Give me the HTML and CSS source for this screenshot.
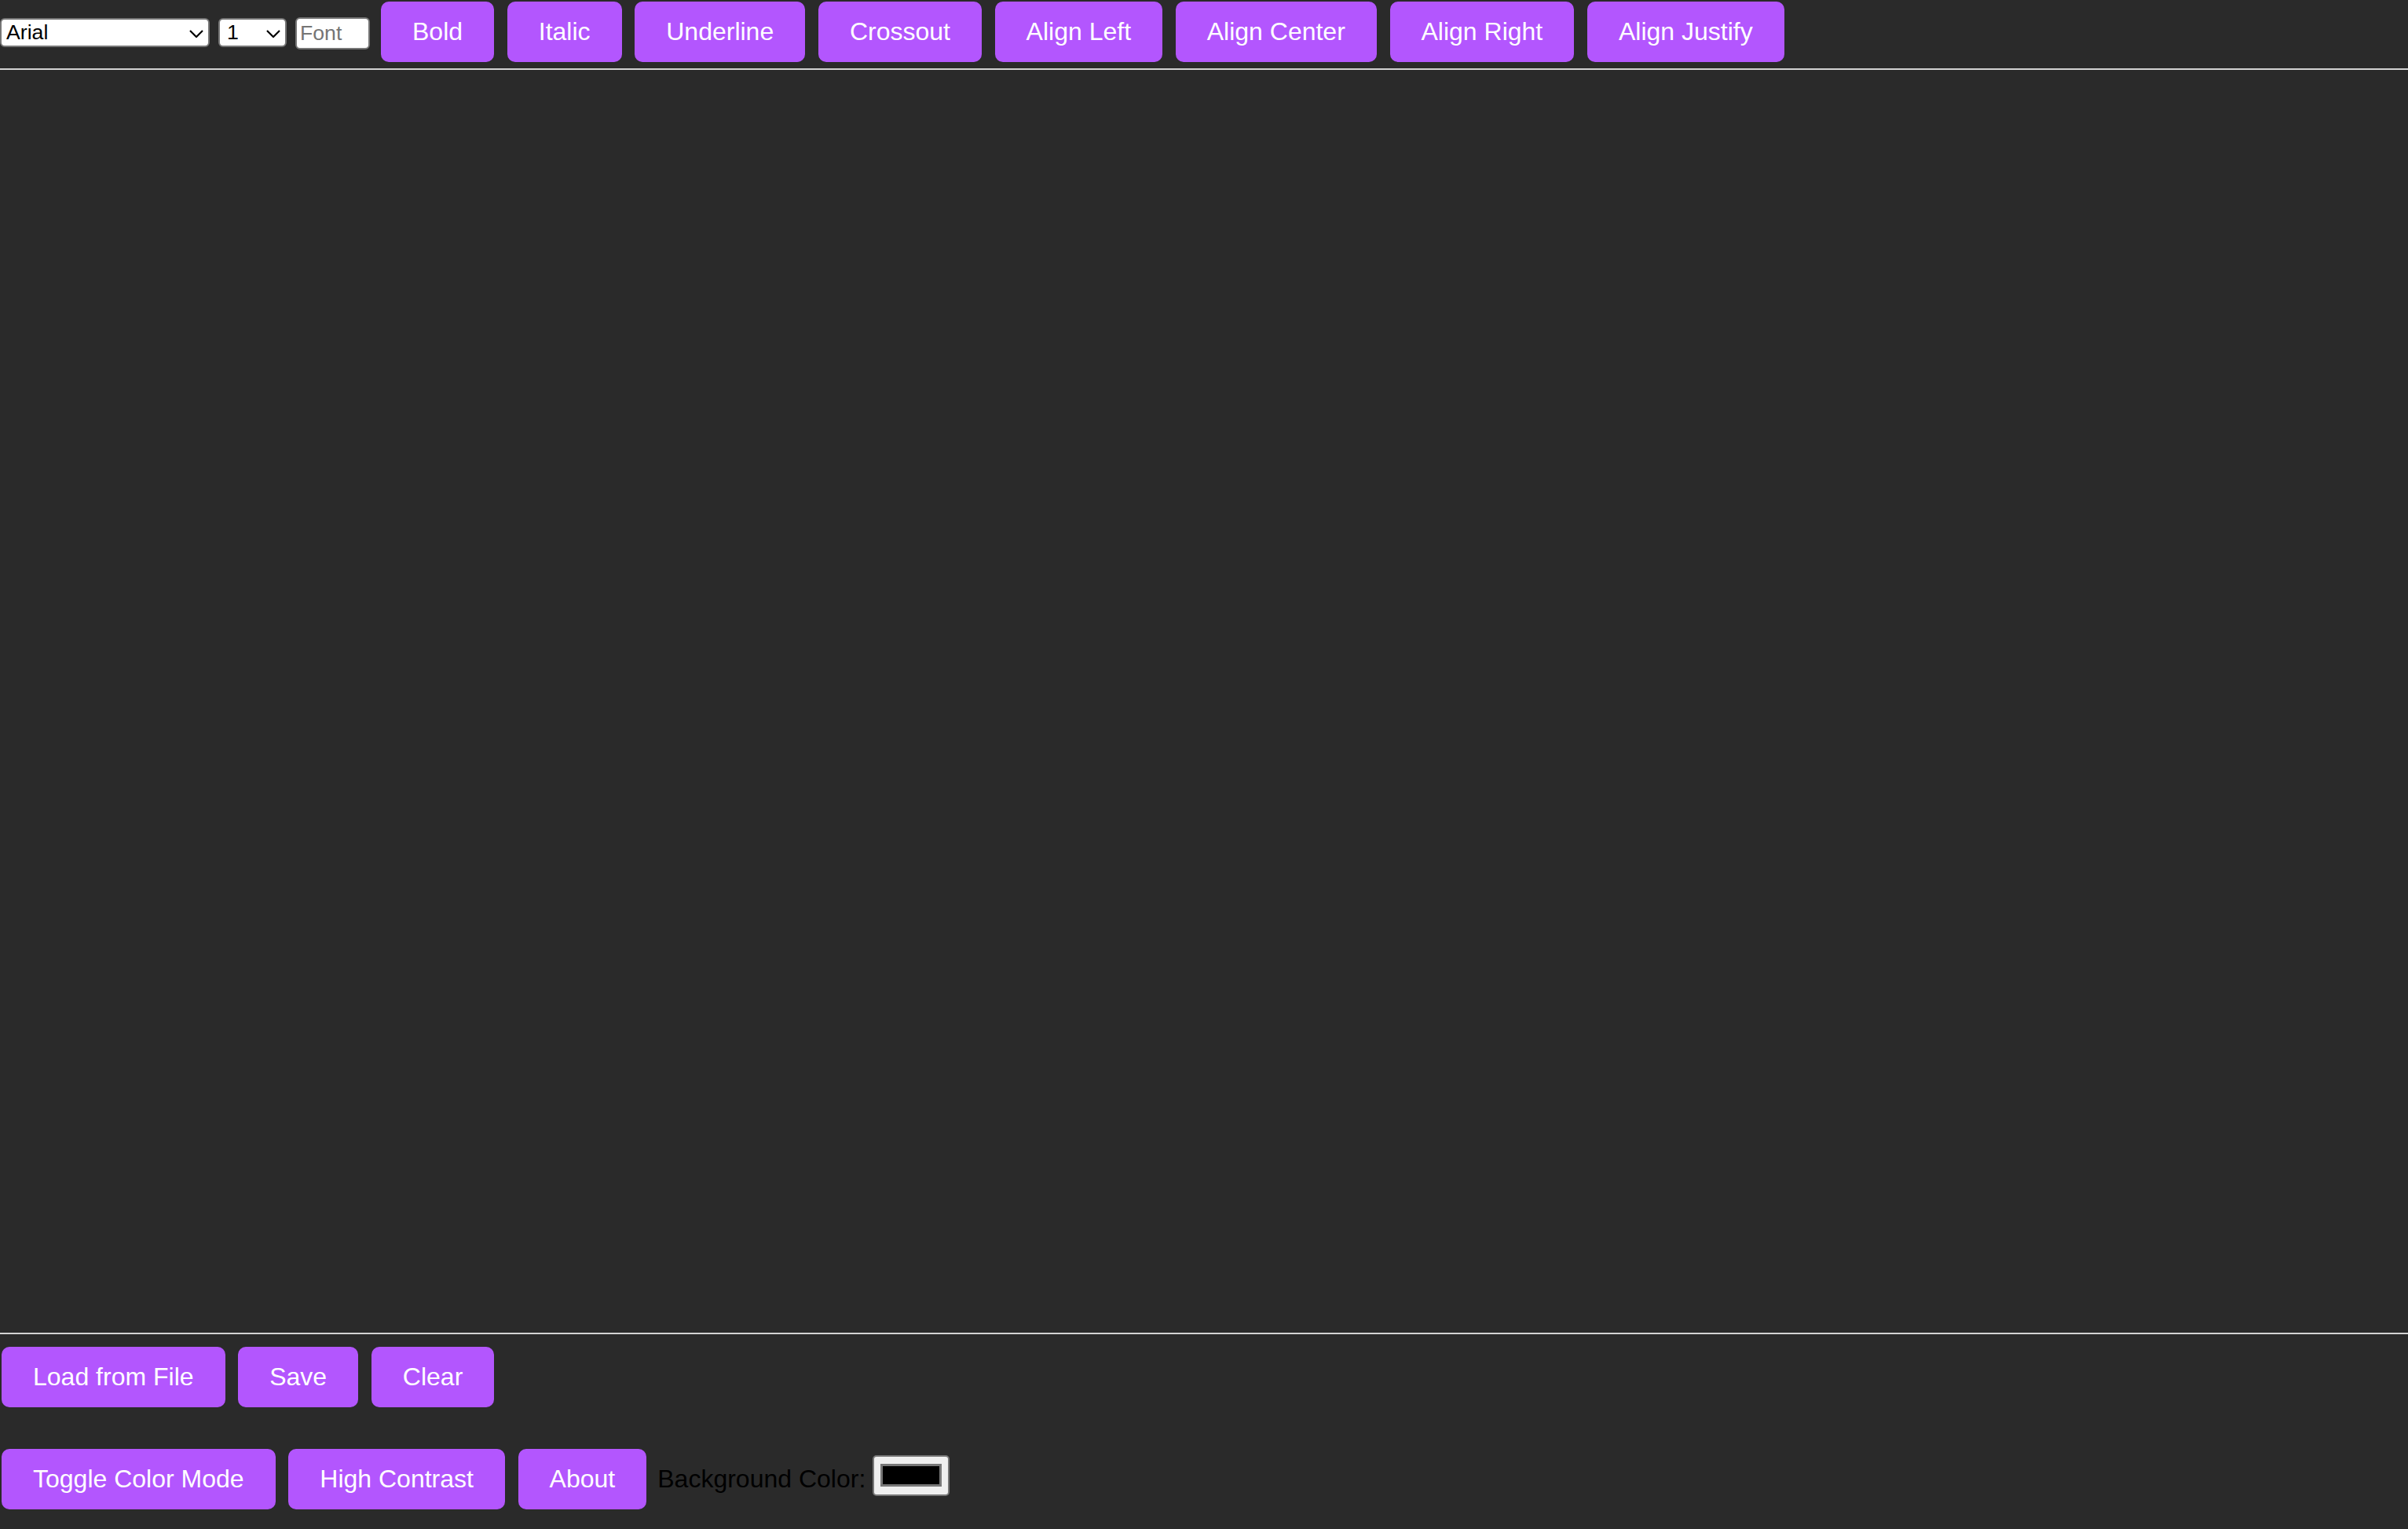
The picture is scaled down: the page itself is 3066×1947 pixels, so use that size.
FILE: index.html
```html
<!DOCTYPE html>
<html lang="en">
<head>
<meta charset="utf-8">
<title>Text Editor</title>
<link rel="stylesheet" href="styles.css">
</head>
<body>
<div class="toolbar">
  <span class="select-wrap select-font">
    <select class="select">
      <option>Arial</option>
    </select>
    <svg class="chevron" width="18" height="10" viewBox="0 0 18 10"><path d="M1 1 L9 9 L17 1" fill="none" stroke="#000" stroke-width="2.2"/></svg>
  </span>
  <span class="select-wrap select-size">
    <select class="select">
      <option>1</option>
    </select>
    <svg class="chevron" width="18" height="10" viewBox="0 0 18 10"><path d="M1 1 L9 9 L17 1" fill="none" stroke="#000" stroke-width="2.2"/></svg>
  </span>
  <input class="font-input" type="text" placeholder="Font">
  <button class="btn">Bold</button>
  <button class="btn">Italic</button>
  <button class="btn">Underline</button>
  <button class="btn">Crossout</button>
  <button class="btn">Align Left</button>
  <button class="btn">Align Center</button>
  <button class="btn">Align Right</button>
  <button class="btn">Align Justify</button>
</div>
<div class="editor" contenteditable="true"></div>
<div class="actions actions-file">
  <button class="btn">Load from File</button>
  <button class="btn">Save</button>
  <button class="btn">Clear</button>
</div>
<div class="actions actions-view">
  <button class="btn">Toggle Color Mode</button>
  <button class="btn">High Contrast</button>
  <button class="btn">About</button>
  <label class="bg-label" for="bgc">Background Color:</label>
  <input class="color-input" id="bgc" type="color" value="#000000">
</div>
</body>
</html>
```
FILE: styles.css
```css
html, body {
  margin: 0;
  padding: 0;
  background: #2a2a2a;
  font-family: "Liberation Sans", Arial, sans-serif;
}

body {
  min-height: 1947px;
}

.toolbar {
  display: flex;
  align-items: center;
  padding-top: 2px;
  margin-bottom: 8px;
  height: 77px;
}

.select-wrap {
  position: relative;
  display: block;
  margin: 2px 11px 0 0;
}

.select {
  appearance: none;
  -webkit-appearance: none;
  display: block;
  box-sizing: border-box;
  height: 37px;
  margin: 0;
  padding: 0 0 0 6px;
  border: 2px solid #767676;
  border-radius: 6px;
  background: #fff;
  color: #000;
  font-family: "Liberation Sans", Arial, sans-serif;
  font-size: 26.67px;
  line-height: 33px;
}

.select-font .select {
  width: 267px;
}

.select-size .select {
  width: 87px;
  padding-left: 9px;
}

.chevron {
  position: absolute;
  right: 8px;
  top: 15px;
  pointer-events: none;
}

.font-input {
  box-sizing: border-box;
  width: 95px;
  height: 41px;
  margin: 3px 14px 0 0;
  padding: 0 4px;
  border: 2px solid #767676;
  border-radius: 6px;
  background: #fff;
  color: #000;
  font-family: "Liberation Sans", Arial, sans-serif;
  font-size: 26.67px;
}

.font-input::placeholder {
  color: #757575;
}

.btn {
  display: block;
  flex: none;
  margin: 0 16.7px 0 0;
  padding: 20px 40px;
  border: none;
  border-radius: 10px;
  background: #b356fe;
  color: #fff;
  font-family: "Liberation Sans", Arial, sans-serif;
  font-size: 32px;
  line-height: 37px;
  cursor: pointer;
}

.editor {
  box-sizing: border-box;
  height: 1612px;
  border-top: 2px solid #d3d3d3;
  border-bottom: 2px solid #d3d3d3;
  outline: none;
  color: #fff;
}

.actions {
  display: flex;
  align-items: flex-start;
  padding-left: 2px;
}

.actions-file {
  margin-top: 16px;
}

.actions-view {
  margin-top: 53px;
}

.actions-view .btn:nth-of-type(3) {
  margin-right: 14px;
}

.bg-label {
  padding: 20px 0;
  margin-right: 9px;
  color: #000;
  font-size: 32px;
  line-height: 37px;
}

.color-input {
  -webkit-appearance: none;
  appearance: none;
  box-sizing: border-box;
  width: 98px;
  height: 52px;
  margin: 8px 0 0 0;
  padding: 9px 8px 10px;
  border: 2px solid #767676;
  border-radius: 5px;
  background: #efefef;
  cursor: pointer;
}

.color-input::-webkit-color-swatch-wrapper {
  padding: 0;
}

.color-input::-webkit-color-swatch {
  border: 3px solid #777;
  border-radius: 0;
}
```
